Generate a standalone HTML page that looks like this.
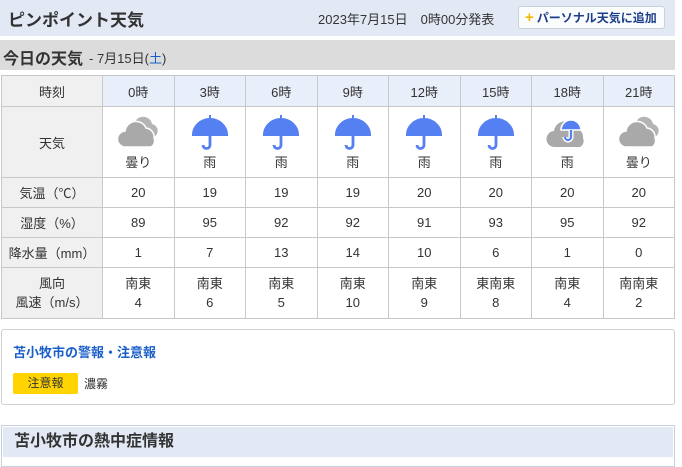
<!DOCTYPE html>
<html><head><meta charset="utf-8"><style>
body{margin:0;width:682px;height:463px;overflow:hidden;background:#fff;font-family:"Liberation Sans","Noto Sans CJK JP",sans-serif;color:#333;position:relative}
.hd{position:absolute;left:0;top:0;width:675px;height:36px;background:#e3e9f4}
.hd h1{position:absolute;left:8px;top:6px;margin:0;font-size:17px;font-weight:bold;color:#333}
.hd .dt{position:absolute;left:318px;top:9px;font-size:13px}
.btn{position:absolute;left:518px;top:6px;width:147px;height:23px;border:1px solid #c8d0dc;background:#fbfcfe;border-radius:3px;font-size:12px;font-weight:bold;color:#1d3f8a;line-height:22px;box-sizing:border-box;padding-left:6px}
.btn b{color:#f5b800;font-size:15px;margin-right:3px}
.sb{position:absolute;left:0;top:40px;width:675px;height:30px;background:#dcdcdc}
.sb h2{position:absolute;left:3px;top:5px;margin:0;font-size:16px;font-weight:bold}
.sb span{position:absolute;left:89px;top:8px;font-size:13px}
table{position:absolute;left:1px;top:75px;border-collapse:collapse;table-layout:fixed;font-size:13px}
td{border:1px solid #c8c8c8;text-align:center;padding:0;vertical-align:middle}
td.l{background:#f0f0f0;width:100px}
tr.h td{background:#e8eefa;height:30px}
tr.h td.l{background:#f0f0f0}
td.c{width:70.5px}
tr.w td{height:70px}
tr.n td{height:29px}
tr.wd td{height:50px;line-height:19px}
svg{display:block;margin:0 auto}
.wb{position:absolute;left:1px;top:329px;width:672px;height:74px;border:1px solid #d0d0d0;border-radius:3px}
.wb h3{position:absolute;left:11px;top:12px;margin:0;font-size:13px;font-weight:bold;color:#1a5fc8}
.tag{position:absolute;left:11px;top:43px;width:65px;height:21px;background:#ffd400;border-radius:2px;font-size:12px;text-align:center;line-height:21px}
.wb .tx{position:absolute;left:82px;top:45px;font-size:12px}
.hb{position:absolute;left:1px;top:425px;width:672px;height:40px;border:1px solid #c8d0e0}
.hb div{position:absolute;left:1px;top:1px;right:1px;height:30px;background:#e3e9f4;font-size:16px;font-weight:bold;padding-left:11px;line-height:30px}
</style></head><body>
<div class="hd"><h1>ピンポイント天気</h1><div class="dt">2023年7月15日　0時00分発表</div><div class="btn"><b>+</b>パーソナル天気に追加</div></div>
<div class="sb"><h2>今日の天気</h2><span>- 7月15日(<span style="position:static;color:#1a5fc8">土</span>)</span></div>
<table>
<tr class="h"><td class="l">時刻</td><td class="c">0時</td><td class="c">3時</td><td class="c">6時</td><td class="c">9時</td><td class="c">12時</td><td class="c">15時</td><td class="c">18時</td><td class="c">21時</td></tr>
<tr class="w"><td class="l">天気</td>
<td><svg width="42" height="36" viewBox="0 0 42 36"><path d="M18 8a9 9 0 0 1 17 2a7 7 0 0 1 2 13h-4" fill="#b4b4b4"/><path d="M9 33a8 8 0 0 1 -1-16a11 11 0 0 1 21-3a9 9 0 0 1 8 10a7 7 0 0 1 -3 9z" fill="#a9a9a9" stroke="#fff" stroke-width="1.5"/></svg><div style="margin-top:2px">曇り</div></td>
<td><svg width="42" height="36" viewBox="0 0 42 36"><path d="M21 1v4M4 21a17 16 0 0 1 34 0z" fill="#5580f2" stroke="#5580f2" stroke-width="2"/><path d="M21 21v10a3.5 3.5 0 0 1 -7 0" fill="none" stroke="#5580f2" stroke-width="2.8"/></svg><div style="margin-top:2px">雨</div></td>
<td><svg width="42" height="36" viewBox="0 0 42 36"><path d="M21 1v4M4 21a17 16 0 0 1 34 0z" fill="#5580f2" stroke="#5580f2" stroke-width="2"/><path d="M21 21v10a3.5 3.5 0 0 1 -7 0" fill="none" stroke="#5580f2" stroke-width="2.8"/></svg><div style="margin-top:2px">雨</div></td>
<td><svg width="42" height="36" viewBox="0 0 42 36"><path d="M21 1v4M4 21a17 16 0 0 1 34 0z" fill="#5580f2" stroke="#5580f2" stroke-width="2"/><path d="M21 21v10a3.5 3.5 0 0 1 -7 0" fill="none" stroke="#5580f2" stroke-width="2.8"/></svg><div style="margin-top:2px">雨</div></td>
<td><svg width="42" height="36" viewBox="0 0 42 36"><path d="M21 1v4M4 21a17 16 0 0 1 34 0z" fill="#5580f2" stroke="#5580f2" stroke-width="2"/><path d="M21 21v10a3.5 3.5 0 0 1 -7 0" fill="none" stroke="#5580f2" stroke-width="2.8"/></svg><div style="margin-top:2px">雨</div></td>
<td><svg width="42" height="36" viewBox="0 0 42 36"><path d="M21 1v4M4 21a17 16 0 0 1 34 0z" fill="#5580f2" stroke="#5580f2" stroke-width="2"/><path d="M21 21v10a3.5 3.5 0 0 1 -7 0" fill="none" stroke="#5580f2" stroke-width="2.8"/></svg><div style="margin-top:2px">雨</div></td>
<td><svg width="42" height="36" viewBox="0 0 42 36"><path d="M9 33a8 8 0 0 1 -1-16a11 11 0 0 1 21-3a9 9 0 0 1 8 10a7 7 0 0 1 -3 9z" fill="#a9a9a9"/><path d="M25 2v3M15 16a10 10 0 0 1 20 0z" fill="#5580f2" stroke="#fff" stroke-width="1.5"/><path d="M25 16v7a3 3 0 0 1 -6 0" fill="none" stroke="#fff" stroke-width="5"/><path d="M25 16v7a3 3 0 0 1 -6 0" fill="none" stroke="#5580f2" stroke-width="2.2"/></svg><div style="margin-top:2px">雨</div></td>
<td><svg width="42" height="36" viewBox="0 0 42 36"><path d="M18 8a9 9 0 0 1 17 2a7 7 0 0 1 2 13h-4" fill="#b4b4b4"/><path d="M9 33a8 8 0 0 1 -1-16a11 11 0 0 1 21-3a9 9 0 0 1 8 10a7 7 0 0 1 -3 9z" fill="#a9a9a9" stroke="#fff" stroke-width="1.5"/></svg><div style="margin-top:2px">曇り</div></td></tr>
<tr class="n"><td class="l">気温（℃）</td><td>20</td><td>19</td><td>19</td><td>19</td><td>20</td><td>20</td><td>20</td><td>20</td></tr>
<tr class="n"><td class="l">湿度（%）</td><td>89</td><td>95</td><td>92</td><td>92</td><td>91</td><td>93</td><td>95</td><td>92</td></tr>
<tr class="n"><td class="l">降水量（mm）</td><td>1</td><td>7</td><td>13</td><td>14</td><td>10</td><td>6</td><td>1</td><td>0</td></tr>
<tr class="wd"><td class="l">風向<br>風速（m/s）</td><td>南東<br>4</td><td>南東<br>6</td><td>南東<br>5</td><td>南東<br>10</td><td>南東<br>9</td><td>東南東<br>8</td><td>南東<br>4</td><td>南南東<br>2</td></tr>
</table>
<div class="wb"><h3>苫小牧市の警報・注意報</h3><div class="tag">注意報</div><div class="tx">濃霧</div></div>
<div class="hb"><div>苫小牧市の熱中症情報</div></div>
</body></html>
